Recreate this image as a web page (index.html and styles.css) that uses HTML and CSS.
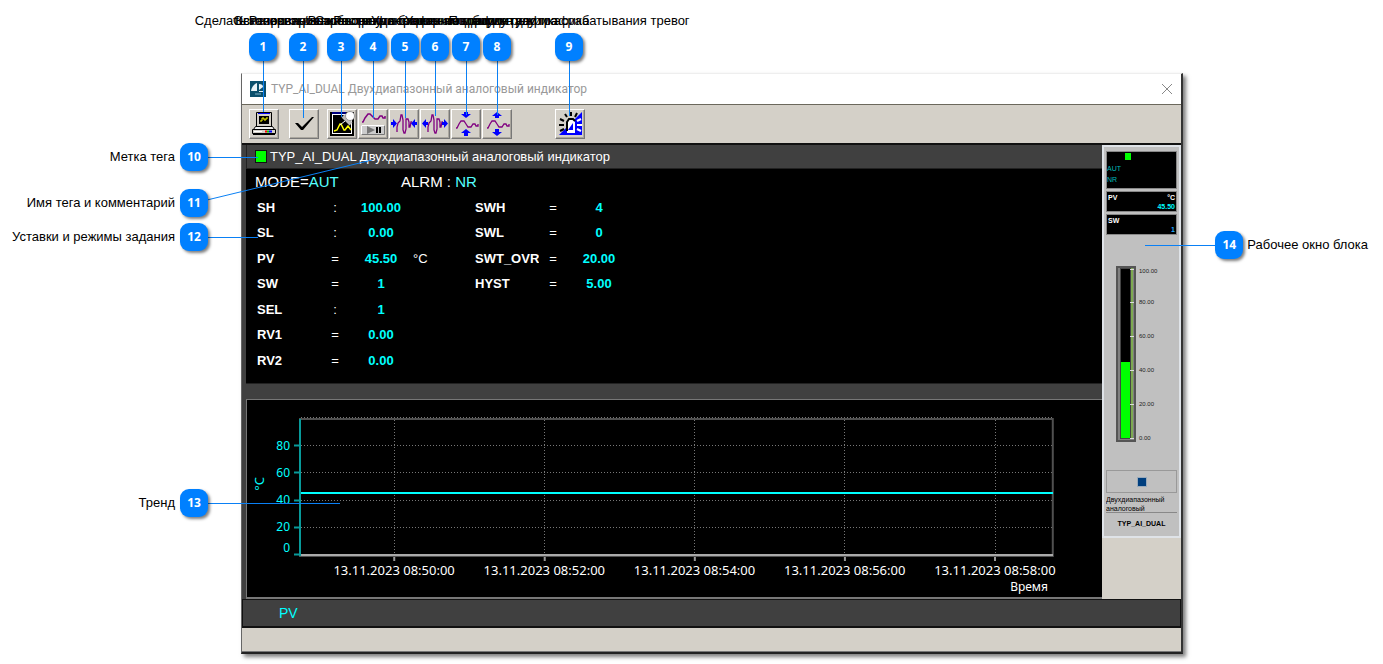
FILE: index.html
```html
<!DOCTYPE html>
<html lang="ru">
<head>
<meta charset="utf-8">
<title>TYP_AI_DUAL Двухдиапазонный аналоговый индикатор</title>
<link rel="stylesheet" href="styles.css">
</head>
<body>
<main class="figure">
  <section class="window">
    <header class="titlebar">
      <svg class="app-icon" width="16" height="16" viewBox="0 0 16 16"><rect width="16" height="16" fill="#0b4f6c"/><path d="M1 10Q2 4 7 2V10zM9 3q4 0 4 3l-4 3zM9 10h4v1H9z" fill="#e8f2f6"/><path d="M5 13h6" stroke="#7fb0c4"/></svg>
      <h1 class="title">TYP_AI_DUAL Двухдиапазонный аналоговый индикатор</h1>
      <button class="close" aria-label="Закрыть"><svg width="12" height="12" viewBox="0 0 12 12"><path d="M1 1l10 10M11 1L1 11" stroke="#888" fill="none"/></svg></button>
    </header>
    <div class="toolbar">
      <button class="tool" aria-label="Копия экрана"><svg width="28" height="28" viewBox="0 0 28 28"><path d="M6.500 2.500h15v14h-15z" fill="#d4d0c8" stroke="#000"/><path d="M8 3.500h12" stroke="#00f"/><path d="M9 6h10v8H9z" fill="#000"/><path d="M10 11h2V8h2v2h2V8h2" stroke="#ff0" fill="none"/><path d="M5.500 16.500h17l2 3h-21z" fill="#eee" stroke="#000"/><path d="M2.500 19.500h23v4h-23z" fill="#d4d0c8" stroke="#000"/><path d="M3 24.500h22" stroke="#000"/><path d="M4 21.500h8" stroke="#fff"/><path d="M15 21.500h2" stroke="#f00" stroke-width="2"/><path d="M17 21.500h2" stroke="#0c0" stroke-width="2"/><path d="M19 21.500h3" stroke="#00f" stroke-width="2"/></svg></button>
      <button class="tool tool-check" aria-label="Квитировать"><svg width="28" height="28" viewBox="0 0 28 28"><path d="M5 13h3l4 4L22 7h2L13 20h-2z"/></svg></button>
      <button class="tool tool-pin" aria-label="Резервировать тренд"><svg width="28" height="28" viewBox="0 0 28 28"><path d="M3 3h22v22H3z" fill="#fff" stroke="#000" stroke-width="2"/><path d="M4 3h14" stroke="#00f"/><path d="M5 5h18v18H5z" fill="#000"/><path d="M6 21l3-1 3-6h1l3 6h1l3-4 3 4" stroke="#ff0" fill="none" stroke-width="1.500"/><path d="M17 11l-5 4" stroke="#fff"/><path d="M15 6l8 8" stroke="#bbb" stroke-width="4"/><circle cx="22" cy="6" r="4.500" fill="#fff" stroke="#999"/></svg></button>
      <button class="tool" aria-label="Остановить или возобновить"><svg width="28" height="28" viewBox="0 0 28 28"><path d="M3 12h1l2-4 3-4h2l3 3 2 2h3l2-3h2l1 2h2V6" stroke="#800080" fill="none" stroke-width="1.500"/><path d="M2.500 15.500h23v9h-23z" fill="#ccc" stroke="#777"/><path d="M2.500 24.500v-9h23" stroke="#fff" fill="none"/><path d="M8 16l8 4-8 4z" fill="#777"/><path d="M17 17h2v6h-2zM20 17h2v6h-2z"/></svg></button>
      <button class="tool" aria-label="Сжать по времени"><svg width="28" height="28" viewBox="0 0 28 28"><path d="M7 22v-5l1-4 2-2 1-6h1l1 5v10l1 3h1l1-4V9h2l1 3v5h1l1-5h1" stroke="#800080" fill="none" stroke-width="1.300"/><path d="M1 12h2V9l4 4.500L3 18v-3H1zM27 12h-2V9l-4 4.500 4 4.500v-3h2z" fill="#00f"/></svg></button>
      <button class="tool" aria-label="Растянуть по времени"><svg width="28" height="28" viewBox="0 0 28 28"><path d="M7 22v-5l1-4 2-2 1-6h1l1 5v10l1 3h1l1-4V9h2l1 3v5h1l1-5h1" stroke="#800080" fill="none" stroke-width="1.300"/><path d="M7 12H5V9l-4 4.500L5 18v-3h2zM21 12h2V9l4 4.500-4 4.500v-3h-2z" fill="#00f"/></svg></button>
      <button class="tool" aria-label="Уменьшить амплитуду"><svg width="28" height="28" viewBox="0 0 28 28"><path d="M4 18h1l2-4 2-3h3l2 3 2 3h3l2-3h2l1 2h2v-2" stroke="#800080" fill="none" stroke-width="1.300"/><path d="M12 2h4v2h3l-5 4-5-4h3zM12 26h4v-3h3l-5-4-5 4h3z" fill="#00f"/></svg></button>
      <button class="tool" aria-label="Увеличить амплитуду"><svg width="28" height="28" viewBox="0 0 28 28"><path d="M4 18h1l2-4 2-3h3l2 3 2 3h3l2-3h2l1 2h2v-2" stroke="#800080" fill="none" stroke-width="1.300"/><path d="M12 8h4V6h3l-5-4-5 4h3zM12 19h4v3h3l-5 4-5-4h3z" fill="#00f"/></svg></button>
      <button class="tool tool-alarm" aria-label="Срабатывание тревог"><svg width="28" height="28" viewBox="0 0 28 28"><path d="M26 2v23H3z" fill="#00f"/><path d="M11 23V12l2-3h4l2 3v11z" fill="#fff"/><path d="M11 21V12l2-3h4l2 2" stroke="#000" stroke-width="2" fill="none"/><path d="M12 20l5-7v7z" fill="#00f"/><path d="M9 4l2 3M15 2v4M21 3l-2 4M4 9l4 2M3 15h5M4 21l4-2" stroke="#000" stroke-width="2"/><path d="M25 9l-4 2M26 15h-5M25 21l-4-2" stroke="#fff" stroke-width="2"/></svg></button>
    </div>
    <div class="body">
      <div class="content">
        <div class="tag"><span class="tag-mark"></span><h2 class="tag-name">TYP_AI_DUAL Двухдиапазонный аналоговый индикатор</h2></div>
        <div class="params">
          <div class="modes"><p class="mode">MODE=<span class="live">AUT</span></p><p class="mode">ALRM : <span class="live">NR</span></p></div>
          <div class="tables">
            <table class="values">
              <tr><th>SH</th><td class="op">:</td><td class="val">100.00</td><td class="unit"></td></tr>
              <tr><th>SL</th><td class="op">:</td><td class="val">0.00</td><td></td></tr>
              <tr><th>PV</th><td class="op">=</td><td class="val">45.50</td><td class="unit">°C</td></tr>
              <tr><th>SW</th><td class="op">=</td><td class="val">1</td><td></td></tr>
              <tr><th>SEL</th><td class="op">:</td><td class="val">1</td><td></td></tr>
              <tr><th>RV1</th><td class="op">=</td><td class="val">0.00</td><td></td></tr>
              <tr><th>RV2</th><td class="op">=</td><td class="val">0.00</td><td></td></tr>
            </table>
            <table class="values">
              <tr><th>SWH</th><td class="op">=</td><td class="val">4</td></tr>
              <tr><th>SWL</th><td class="op">=</td><td class="val">0</td></tr>
              <tr><th>SWT_OVR</th><td class="op">=</td><td class="val">20.00</td></tr>
              <tr><th>HYST</th><td class="op">=</td><td class="val">5.00</td></tr>
            </table>
          </div>
        </div>
        <div class="trend">
          <div class="trend-main">
            <span class="y-unit">°C</span>
            <div class="y-axis"><span>80</span><span>60</span><span>40</span><span>20</span><span class="zero">0</span></div>
            <svg class="plot" width="100%" height="144">
              <g stroke="#777" stroke-width="1" stroke-dasharray="1 2" shape-rendering="crispEdges">
                <line x1="8" x2="100%" y1="0.500" y2="0.500"/><line x1="8" x2="100%" y1="28.500" y2="28.500"/><line x1="8" x2="100%" y1="55.500" y2="55.500"/><line x1="8" x2="100%" y1="83.500" y2="83.500"/><line x1="8" x2="100%" y1="110.500" y2="110.500"/>
              </g>
              <svg x="7" width="100%" height="144" overflow="visible">
                <g stroke="#777" stroke-dasharray="1 2" shape-rendering="crispEdges">
                  <line x1="12.400%" x2="12.400%" y1="3" y2="137"/><line x1="32.200%" x2="32.200%" y1="3" y2="137"/><line x1="51.950%" x2="51.950%" y1="3" y2="137"/><line x1="71.700%" x2="71.700%" y1="3" y2="137"/><line x1="91.450%" x2="91.450%" y1="3" y2="137"/>
                </g>
                <g stroke="#999" stroke-width="2">
                  <line x1="12.400%" x2="12.400%" y1="138" y2="144"/><line x1="32.200%" x2="32.200%" y1="138" y2="144"/><line x1="51.950%" x2="51.950%" y1="138" y2="144"/><line x1="71.700%" x2="71.700%" y1="138" y2="144"/><line x1="91.450%" x2="91.450%" y1="138" y2="144"/>
                </g>
              </svg>
              <rect x="7" y="2" width="99.050%" height="137" fill="none" stroke="#505050" stroke-width="2"/>
              <line x1="7" x2="100%" y1="138" y2="138" stroke="#aaa" stroke-width="2"/>
              <path d="M7 2v137M1 28.500h5M1 55.500h5M1 83.500h5M1 110.500h5M1 137.500h5" stroke="#089a9a" stroke-width="2"/>
              <line x1="8" x2="100%" y1="76" y2="76" stroke="#0ff" stroke-width="2"/>
            </svg>
          </div>
          <div class="x-axis"><span>13.11.2023 08:50:00</span><span>13.11.2023 08:52:00</span><span>13.11.2023 08:54:00</span><span>13.11.2023 08:56:00</span><span>13.11.2023 08:58:00</span></div>
          <p class="x-title">Время</p>
        </div>
      </div>
      <aside class="side">
        <div class="faceplate">
          <div class="screen screen-state"><span class="mini-mark"></span><span>AUT</span><span>NR</span></div>
          <div class="screen screen-pv"><span class="head"><b>PV</b><b>°C</b></span><b class="num">45.50</b></div>
          <div class="screen"><span class="head"><b>SW</b></span><b class="num num-blue">1</b></div>
          <div class="gauge">
            <svg width="20" height="176" viewBox="0 0 20 176"><path d="M1 1h18v174H1z" fill="#808080" stroke="#555" stroke-width="2"/><path d="M4 2h11v171H4z" fill="#444"/><path d="M5 3h9v169H5z"/><path d="M5 96h9v76H5z" fill="#0f0"/><path d="M16 2v171" stroke="#7bd321"/><path d="M14 3.500h4M14 36.500h4M14 70.500h4M14 104.500h4M14 138.500h4M14 172.500h4" stroke="#ddd"/></svg>
            <div class="scale"><span class="scale-top">100.00</span><span>80.00</span><span>60.00</span><span>40.00</span><span>20.00</span><span>0.00</span></div>
          </div>
          <button class="op-button" aria-label="Операция"><span></span></button>
          <p class="desc">Двухдиапазонный аналоговый</p>
          <p class="name">TYP_AI_DUAL</p>
        </div>
      </aside>
    </div>
    <div class="legend">PV</div>
    <footer class="status"></footer>
  </section>

  <svg class="leaders" width="600" height="520" viewBox="0 0 600 520"><path d="M263.500 60V112M303.500 60V118M341.500 60V117M373.500 60V118M405.500 60V118M435.500 60V116M466.500 60V115M497.500 60V115M569.500 60V116M207 157.500H258M207 200L372 160M207 237.500H258M206 503.500H340" stroke="#0a80f5" fill="none"/></svg>
  <div class="callout top c1"><span class="label">Сделать копию экрана</span><b class="badge">1</b></div>
  <div class="callout top c2"><span class="label">Квитирование тревоги</span><b class="badge">2</b></div>
  <div class="callout top c3"><span class="label">Резервирование тренда блока</span><b class="badge">3</b></div>
  <div class="callout top c4"><span class="label">Остановить/Возобновить построение графика</span><b class="badge">4</b></div>
  <div class="callout top c5"><span class="label">Сжать график по горизонтали</span><b class="badge">5</b></div>
  <div class="callout top c6"><span class="label">Растянуть график по горизонтали</span><b class="badge">6</b></div>
  <div class="callout top c7"><span class="label">Уменьшить амплитуду графика</span><b class="badge">7</b></div>
  <div class="callout top c8"><span class="label">Увеличить амплитуду графика</span><b class="badge">8</b></div>
  <div class="callout top c9"><span class="label">Подборка режима срабатывания тревог</span><b class="badge">9</b></div>
  <div class="callout left c10"><span class="label">Метка тега</span><b class="badge">10</b></div>
  <div class="callout left c11"><span class="label">Имя тега и комментарий</span><b class="badge">11</b></div>
  <div class="callout left c12"><span class="label">Уставки и режимы задания</span><b class="badge">12</b></div>
  <div class="callout left c13"><span class="label">Тренд</span><b class="badge">13</b></div>
  <div class="callout c14"><i class="leader"></i><b class="badge">14</b><span class="label">Рабочее окно блока</span></div>
</main>
</body>
</html>
```
FILE: styles.css
```css
* { box-sizing: border-box; }
body, h1, h2, p { margin: 0; }
body { background: #fff; color: #000; font: 13px/16px "Liberation Sans", Arial, sans-serif; }
button { padding: 0; border: 0; background: none; font: inherit; }
svg { display: block; }

.figure { position: relative; min-width: 1100px; padding: 73px 200px 9px 241px; }

.window { border: 1px solid #666; border-top-color: #eee; border-right: 2px solid #333; border-bottom: 2px solid #222; background: #404040; box-shadow: 3px 3px 4px rgba(0, 0, 0, .5); }
.titlebar { display: flex; align-items: center; gap: 5px; height: 31px; padding: 0 8px; background: #fff; border-bottom: 1px solid #6b685c; }
.title { flex: 1; color: #999; font: 12px/16px Roboto, sans-serif; }
.close { display: grid; place-items: center; }

.toolbar { display: flex; gap: 1px; align-items: center; height: 40px; padding: 0 7px; background: #d4d0c8; border-bottom: 2px solid #111; }
.tool { display: grid; place-items: center; width: 30px; height: 30px; background: #d4d0c8; border: 1px solid; border-color: #fff #777 #777 #fff; box-shadow: inset -1px -1px #aaa69e; }
.tool-check { margin-left: 9px; }
.tool-pin { margin-left: 7px; }
.tool-alarm { margin-left: 42px; }

.body { display: flex; }
.content { flex: 1; min-width: 0; padding-left: 4px; }
.tag { display: flex; align-items: center; gap: 3px; height: 24px; padding-left: 8px; color: #fff; border-left: 1px solid #222; border-bottom: 1px solid #222; }
.tag-mark { width: 12px; height: 13px; background: #0f0; border: 1px solid #111; }
.tag-name { font-size: 13px; font-weight: 400; }

.params { height: 215px; padding: 3px 11px 0 9px; color: #fff; background: #000; border-bottom: 1px solid #222; }
.modes { display: flex; font-size: 15px; line-height: 20px; }
.mode { width: 146px; }
.live { color: #5ff; }
.tables { display: flex; padding: 3px 0 0 2px; font-size: 13px; }
.values { border-collapse: collapse; table-layout: fixed; align-self: flex-start; }
.values tr { height: 25px; }
.values tr:nth-child(even) { height: 26px; }
.values th { width: 64px; max-width: 64px; padding: 0; overflow: hidden; text-align: left; }
.values td { padding: 0; }
.values .op { width: 28px; text-align: center; }
.values .val { width: 64px; color: #0ff; font-weight: 700; text-align: center; }
.values .unit { width: 62px; }

.trend { margin-top: 15px; padding: 17px 0 2px; color: #fff; background: #000; border: 1px solid #777; border-right: 0; border-bottom-width: 2px; font: 12px/16px "Noto Sans", sans-serif; }
.trend-main { display: flex; padding-right: 49px; color: #0ff; }
.y-unit { width: 16px; margin: 60px 0 0 4px; writing-mode: vertical-rl; transform: rotate(180deg); align-self: flex-start; font-size: 13px; }
.y-axis { display: flex; flex-direction: column; width: 23px; padding-top: 15px; line-height: 27px; text-align: right; }
.y-axis .zero { line-height: 16px; }
.plot { flex: 1; min-width: 0; margin-left: 3px; overflow: visible; }
.x-axis { display: grid; grid-template-columns: repeat(5, 1fr); margin: 1px 32px 0 72px; font-size: 13px; text-align: center; }
.x-title { margin-top: 1px; padding-right: 54px; text-align: right; }

.side { width: 79px; background: #d4d0c8; }
.faceplate { padding: 4px 2px 2px; background: #c0c0c0; border: 2px solid #dfe3e8; font-size: 7px; line-height: 9px; }
.screen { display: flex; flex-direction: column; height: 21px; margin-bottom: 2px; padding: 1px 1px 0; color: #fff; background: #000; border: 1px solid #888; }
.screen-state { height: 38px; padding: 1px 0 0; color: #0bb; line-height: 11px; }
.mini-mark { width: 6px; height: 7px; margin: 0 0 3px 18px; background: #0f0; flex: none; }
.head { display: flex; justify-content: space-between; }
.num { color: #0ff; text-align: right; }
.num-blue { color: #2af; }
.gauge { display: flex; gap: 3px; margin: 31px 0 0 10px; }
.scale { display: flex; flex-direction: column; color: #222; font-size: 6px; line-height: 34px; padding-top: 1px; }
.scale-top { line-height: 9px; margin-bottom: 9px; }
.op-button { display: grid; place-items: center; width: 100%; height: 23px; margin-top: 15px; border: 1px solid #999; }
.op-button span { width: 8px; height: 8px; background: #003f7f; outline: 1px solid #9ab; }
.desc { height: 18px; margin-top: 2px; border-bottom: 1px solid #888; overflow: hidden; }
.name { padding: 6px 0; font-weight: 700; text-align: center; }

.legend { height: 29px; padding-left: 36px; color: #0ff; font-size: 14px; line-height: 26px; border: 1px solid #111; border-bottom-width: 2px; }
.status { height: 24px; background: #d4d0c8; border-bottom: 1px solid #777; }

.leaders { position: absolute; top: 0; left: 0; pointer-events: none; }
.callout { position: absolute; display: flex; align-items: center; white-space: nowrap; }
.badge { display: grid; place-items: center; width: 28px; height: 28px; color: #fff; background: #0080ff; border-radius: 9px; box-shadow: 2px 2px 3px rgba(0, 0, 0, .5); font: 700 12px/16px "Noto Sans", sans-serif; }
.top { top: 13px; width: 28px; flex-direction: column; gap: 4px; }
.left { left: 0; width: 208px; justify-content: flex-end; gap: 5px; }
.c1 { left: 249px; }
.c2 { left: 289px; }
.c3 { left: 327px; }
.c4 { left: 359px; }
.c5 { left: 391px; }
.c6 { left: 421px; }
.c7 { left: 452px; }
.c8 { left: 483px; }
.c9 { left: 555px; }
.c10 { top: 143px; }
.c11 { top: 189px; }
.c12 { top: 223px; }
.c13 { top: 489px; }
.c14 { top: 231px; right: 15px; gap: 4px; }
.leader { width: 70px; height: 1px; margin-right: -4px; background: #0a80f5; }
```
